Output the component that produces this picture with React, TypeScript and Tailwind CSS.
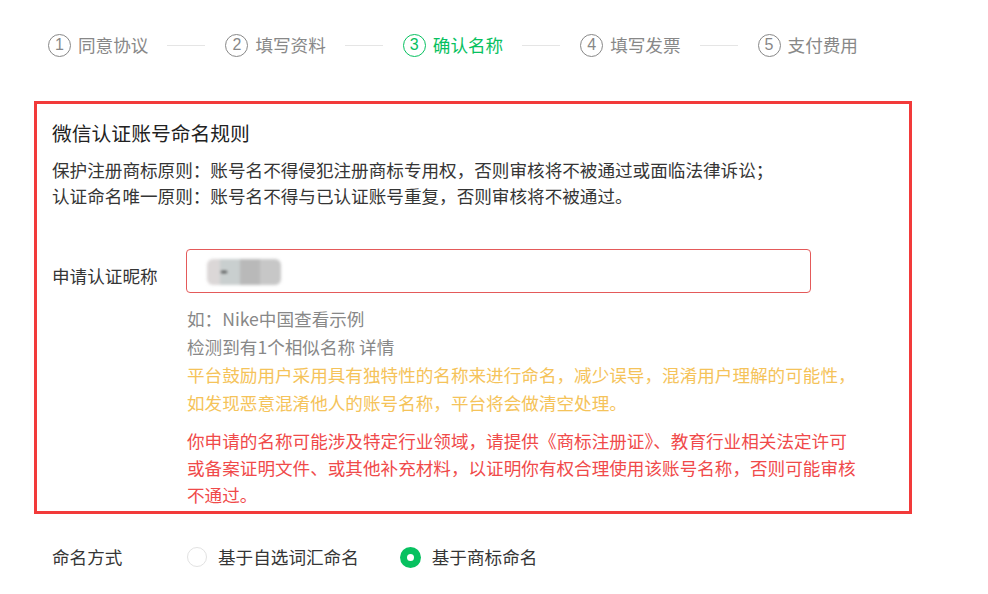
const steps = ['同意协议', '填写资料', '确认名称', '填写发票', '支付费用']

function Stepper({ current }: { current: number }) {
  return (
    <div className="flex items-center h-[24px] mt-[33px] pl-[48px]">
      {steps.map((name, i) => {
        const active = i === current
        return (
          <div key={name} className="flex items-center">
            <div
              className={
                active
                  ? 'w-[23px] h-[23px] rounded-full border border-[#07c160] text-[#07c160] flex items-center justify-center text-[16px] leading-none font-["Liberation_Sans",sans-serif]'
                  : 'w-[23px] h-[23px] rounded-full border border-[#888] text-[#888] flex items-center justify-center text-[16px] leading-none font-["Liberation_Sans",sans-serif]'
              }
            >
              {i + 1}
            </div>
            <span
              className={
                active
                  ? 'ml-[7px] text-[17.6px] leading-[24px] text-[#07c160]'
                  : 'ml-[7px] text-[17.6px] leading-[24px] text-[#888]'
              }
            >
              {name}
            </span>
            {i < steps.length - 1 && (
              <div className="w-[38px] h-px bg-[#e5e5e5] ml-[19px] mr-[20px]" />
            )}
          </div>
        )
      })}
    </div>
  )
}

export default function App() {
  return (
    <div className="w-[988px] h-[594px] bg-white overflow-hidden text-[#353535] font-['Noto_Sans_CJK_SC','Microsoft_YaHei',sans-serif]">
      <Stepper current={2} />

      {/* naming rules box */}
      <div className="mt-[44px] ml-[34px] w-[878px] border-[3px] border-[#f23a3a] pl-[15px] pt-[15px] pb-[3px]">
        <div className="text-[19.8px] leading-[28px] text-[#222]">微信认证账号命名规则</div>
        <div className="mt-[10px] text-[17.6px] leading-[26px] whitespace-nowrap">
          <div>保护注册商标原则：账号名不得侵犯注册商标专用权，否则审核将不被通过或面临法律诉讼；</div>
          <div>认证命名唯一原则：账号名不得与已认证账号重复，否则审核将不被通过。</div>
        </div>

        <div className="flex mt-[40px]">
          <div className="w-[134px] pt-[14px] text-[17.6px] leading-[26px]">申请认证昵称</div>
          <div className="w-[625px] h-[44px] border border-[#e45a5a] rounded-[4px] pl-[20px] pt-[9px]">
            <div className="flex h-[26px] w-[74px] blur-[1.5px]">
              <div className="w-[13px] bg-[#dbd7d7] rounded-l-[6px]" />
              <div className="w-[20px] bg-[#c9cfcf] flex items-center pl-[1px]">
                <div className="w-[6px] h-[2px] bg-[#333]" />
              </div>
              <div className="w-[20px] bg-[#b9b9b9]" />
              <div className="w-[21px] bg-[#c7c7c7] rounded-r-[6px]" />
            </div>
          </div>
        </div>

        <div className="pl-[135px] mt-[12px] text-[17.6px] whitespace-nowrap">
          <div className="leading-[28px] text-[#888]">
            <div>如：Nike中国查看示例</div>
            <div>检测到有1个相似名称 详情</div>
          </div>
          <div className="leading-[28px] text-[#f5c35a]">
            <div>平台鼓励用户采用具有独特性的名称来进行命名，减少误导，混淆用户理解的可能性，</div>
            <div>如发现恶意混淆他人的账号名称，平台将会做清空处理。</div>
          </div>
          <div className="mt-[10px] leading-[27px] text-[#f04a4a]">
            <div>你申请的名称可能涉及特定行业领域，请提供《商标注册证》、教育行业相关法定许可</div>
            <div>或备案证明文件、或其他补充材料，以证明你有权合理使用该账号名称，否则可能审核</div>
            <div>不通过。</div>
          </div>
        </div>
      </div>

      {/* naming method */}
      <div className="flex items-center mt-[30px] pl-[52px] h-[26px] text-[17.6px] leading-[26px]">
        <div className="w-[135px]">命名方式</div>
        <div className="w-[20px] h-[20px] rounded-full border border-[#e2e2e2]" />
        <span className="ml-[11px]">基于自选词汇命名</span>
        <div className="ml-[41px] w-[21px] h-[21px] rounded-full bg-[#07c160] flex items-center justify-center">
          <div className="w-[7px] h-[7px] rounded-full bg-white" />
        </div>
        <span className="ml-[11px]">基于商标命名</span>
      </div>
    </div>
  )
}
